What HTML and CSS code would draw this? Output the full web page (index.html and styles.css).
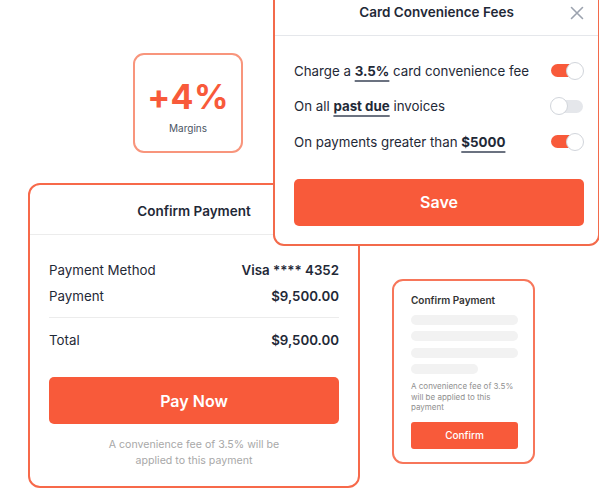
FILE: index.html
```html
<!DOCTYPE html>
<html>
<head>
<meta charset="utf-8">
<link rel="stylesheet" href="styles.css">
</head>
<body>
<div class="canvas">
  <div class="margin-card">
    <div class="margin-value">+4%</div>
    <div class="margin-label">Margins</div>
  </div>

  <div class="confirm-card">
    <div class="card-header">Confirm Payment</div>
    <div class="card-body">
      <div class="row"><span>Payment Method</span><span class="val">Visa **** 4352</span></div>
      <div class="row"><span>Payment</span><span class="val">$9,500.00</span></div>
      <div class="divider"></div>
      <div class="row"><span>Total</span><span class="val">$9,500.00</span></div>
      <button class="btn pay">Pay Now</button>
      <p class="note">A convenience fee of 3.5% will be<br>applied to this payment</p>
    </div>
  </div>

  <div class="mini-card">
    <div class="mini-title">Confirm Payment</div>
    <div class="bars">
      <div class="bar"></div>
      <div class="bar"></div>
      <div class="bar"></div>
      <div class="bar short"></div>
    </div>
    <p class="mini-note">A convenience fee of 3.5% will be applied to this payment</p>
    <button class="btn mini-btn">Confirm</button>
  </div>

  <div class="modal">
    <div class="modal-header">
      <span class="modal-title">Card Convenience Fees</span>
      <svg class="close" width="14" height="14" viewBox="0 0 14 14"><path d="M1.5 1.5 L12.5 12.5 M12.5 1.5 L1.5 12.5" stroke="#9ca3af" stroke-width="1.6" stroke-linecap="round"/></svg>
    </div>
    <div class="modal-body">
      <div class="opt"><span>Charge a <b>3.5%</b> card convenience fee</span><span class="toggle on"></span></div>
      <div class="opt"><span>On all <b>past due</b> invoices</span><span class="toggle"></span></div>
      <div class="opt"><span>On payments greater than <b>$5000</b></span><span class="toggle on"></span></div>
      <button class="btn save">Save</button>
    </div>
  </div>
</div>
</body>
</html>
```

FILE: styles.css
```css
* { box-sizing: border-box; }
html, body { margin: 0; padding: 0; background: #fff; }
body { font-family: Inter, "Noto Sans", sans-serif; color: #1f2937; }

.canvas {
  position: relative;
  width: 599px;
  height: 500px;
  overflow: hidden;
}

.btn {
  display: flex;
  align-items: center;
  justify-content: center;
  border: none;
  background: #f85a3a;
  color: #fff;
  font-family: inherit;
  padding: 0;
  cursor: pointer;
}

/* +4% card */
.margin-card {
  position: absolute;
  left: 133px;
  top: 53px;
  width: 110px;
  height: 100px;
  border: 2px solid #f8957c;
  border-radius: 11px;
  display: flex;
  flex-direction: column;
  align-items: center;
  padding-top: 23px;
}
.margin-value {
  font-size: 34px;
  font-weight: 700;
  color: #f85a3a;
  line-height: 38px;
  letter-spacing: 0.3px;
}
.margin-label {
  font-size: 10px;
  color: #4b5563;
  margin-top: 6px;
}

/* Confirm payment card */
.confirm-card {
  position: absolute;
  left: 28px;
  top: 183px;
  width: 332px;
  height: 305px;
  border: 2px solid #f7694a;
  border-radius: 12px;
  background: #fff;
}
.card-header {
  height: 50px;
  border-bottom: 1px solid #ececec;
  display: flex;
  align-items: center;
  justify-content: center;
  font-size: 13.5px;
  font-weight: 600;
  padding-top: 3px;
}
.card-body {
  padding: 22px 19px 0 19px;
  display: flex;
  flex-direction: column;
}
.row {
  display: flex;
  justify-content: space-between;
  align-items: center;
  font-size: 13.3px;
  height: 26px;
  color: #1f2937;
}
.row .val { font-weight: 600; }
.divider {
  height: 1px;
  background: #ececec;
  margin: 8px 0 9px;
}
.pay {
  margin-top: 24px;
  height: 47px;
  border-radius: 5px;
  font-size: 16px;
  font-weight: 600;
}
.note {
  margin: 13px 0 0;
  text-align: center;
  font-size: 10.6px;
  line-height: 16px;
  color: #a8a8a8;
}

/* mini card */
.mini-card {
  position: absolute;
  left: 392px;
  top: 279px;
  width: 143px;
  height: 185px;
  border: 2px solid #f7765a;
  border-radius: 11px;
  padding: 12px 15px 0 17px;
  display: flex;
  flex-direction: column;
}
.mini-title {
  font-size: 10px;
  font-weight: 600;
  color: #333;
  line-height: 14px;
}
.bars {
  display: flex;
  flex-direction: column;
  gap: 6.3px;
  margin-top: 8px;
}
.bar {
  height: 10px;
  width: 107px;
  border-radius: 5px;
  background: #f2f2f2;
}
.bar.short { width: 67px; }
.mini-note {
  margin: 7.5px 0 0;
  font-size: 8px;
  line-height: 10.5px;
  color: #8f8f8f;
  width: 107px;
}
.mini-btn {
  margin-top: 9px;
  width: 107px;
  height: 27px;
  border-radius: 3px;
  font-size: 10px;
  font-weight: 500;
}

/* modal */
.modal {
  position: absolute;
  left: 273px;
  top: -12px;
  width: 327px;
  height: 258px;
  border: 2px solid #f36a4b;
  border-radius: 11px;
  background: #fff;
}
.modal-header {
  position: relative;
  height: 46px;
  border-bottom: 1px solid #e5e7eb;
  display: flex;
  align-items: center;
  justify-content: center;
  padding-bottom: 1px;
}
.modal-title {
  font-size: 13.5px;
  font-weight: 600;
  color: #1f2937;
}
.close {
  position: absolute;
  right: 14px;
  top: 16px;
}
.modal-body {
  padding: 17px 14px 0 19px;
  display: flex;
  flex-direction: column;
}
.opt {
  display: flex;
  justify-content: space-between;
  align-items: center;
  height: 35.5px;
  font-size: 13.3px;
  color: #1f2937;
}
.opt b {
  font-weight: 700;
  text-decoration: underline;
  text-decoration-thickness: 1.5px;
  text-underline-offset: 4px;
  text-decoration-color: #6b7280;
}
.toggle {
  position: relative;
  width: 32px;
  height: 13px;
  border-radius: 7px;
  background: #e5e7eb;
  margin-right: 1px;
}
.toggle::after {
  content: "";
  position: absolute;
  top: -2.5px;
  left: -1px;
  width: 16px;
  height: 16px;
  border-radius: 50%;
  background: #fff;
  border: 1px solid #d1d5db;
}
.toggle.on { background: #f85a3a; }
.toggle.on::after { left: auto; right: -1px; }
.save {
  margin-top: 19px;
  width: 290px;
  height: 47px;
  border-radius: 5px;
  font-size: 16px;
  font-weight: 600;
}
```
